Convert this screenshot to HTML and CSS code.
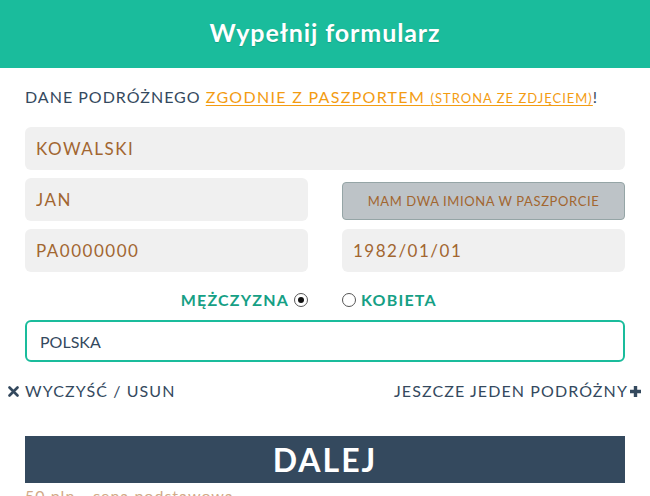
FILE: index.html
```html
<!DOCTYPE html>
<html lang="pl">
<head>
  <meta charset="UTF-8">
  <title>Wypełnij formularz</title>
  <link rel="stylesheet" href="styles.css">
</head>
<body>

<div class="header">
  <h1>Wypełnij formularz</h1>
</div>

<div class="form-container">
  <p class="intro">
    DANE PODRÓŻNEGO <a href="#" class="passport">ZGODNIE Z PASZPORTEM <small>(STRONA ZE ZDJĘCIEM)</small></a>!
  </p>

  <!-- Passenger fields -->
  <div class="form-row">
    <input type="text" class="field" value="KOWALSKI">
  </div>
  <div class="form-row cols">
    <input type="text" class="field" value="JAN">
    <button class="second-name">MAM DWA IMIONA W PASZPORCIE</button>
  </div>
  <div class="form-row cols">
    <input type="text" class="field" value="PA0000000">
    <input type="text" class="field" value="1982/01/01">
  </div>

  <!-- Gender -->
  <div class="gender cols">
    <label class="gender-opt left">MĘŻCZYZNA <span class="radio checked"></span></label>
    <label class="gender-opt"><span class="radio"></span> KOBIETA</label>
  </div>

  <div class="form-row">
    <input type="text" class="field country" value="POLSKA">
  </div>

  <div class="actions">
    <a href="#" class="action">
      <svg width="11" height="11" viewBox="0 0 11 11"><path d="M1.5 1.5l8 8M9.5 1.5l-8 8" stroke="#34495e" stroke-width="2.6" stroke-linecap="round"/></svg>
      WYCZYŚĆ / USUN
    </a>
    <a href="#" class="action">
      JESZCZE JEDEN PODRÓŻNY
      <svg width="13" height="13" viewBox="0 0 13 13"><path d="M6.5 1v11M1 6.5h11" stroke="#34495e" stroke-width="3.4"/></svg>
    </a>
  </div>

  <button class="next">DALEJ</button>
  <p class="price">50 pln - cena podstawowa</p>
</div>

</body>
</html>
```

FILE: styles.css
```css
body {
  margin: 0;
  font-family: Lato, 'Open Sans', sans-serif;
  background: #fff;
  color: #34495e;
}

.header {
  background-color: #1abc9c;
  height: 68px;
  display: flex;
  align-items: center;
  justify-content: center;
}

.header h1 {
  margin: 0 0 5px;
  color: #fff;
  font-size: 25px;
  font-weight: bold;
  letter-spacing: 0.9px;
  text-shadow: 0 1px 1px rgba(0, 0, 0, 0.15);
}

.form-container {
  padding: 20px 25px 0;
}

.intro {
  margin: 0 0 20px;
  font-size: 16px;
  line-height: 18px;
  letter-spacing: 1px;
}

.passport {
  color: #f39c12;
  letter-spacing: 1.3px;
  text-decoration: underline;
  text-underline-offset: 2px;
}

.passport small {
  font-size: 13px;
  letter-spacing: 1px;
}

.form-row {
  margin-bottom: 8px;
}

.cols {
  display: grid;
  grid-template-columns: 1fr 1fr;
  column-gap: 34px;
}

.field {
  box-sizing: border-box;
  width: 100%;
  height: 43px;
  padding: 0 11px;
  border: none;
  border-radius: 6px;
  background: #f0f0f0;
  color: #a26630;
  font-family: inherit;
  font-size: 17px;
  letter-spacing: 1.5px;
  outline: none;
}

.second-name {
  box-sizing: border-box;
  height: 38px;
  margin-top: 4px;
  border: 1px solid #95a5a6;
  border-radius: 4px;
  background: #bdc3c7;
  color: #a26630;
  font-family: inherit;
  font-size: 13px;
  letter-spacing: 0.6px;
  cursor: pointer;
}

.gender {
  margin: 18px 0 10px;
  line-height: 20px;
}

.gender-opt {
  display: flex;
  align-items: center;
  gap: 5px;
  color: #16a085;
  font-size: 16px;
  font-weight: bold;
  letter-spacing: 1.2px;
}

.gender-opt.left {
  justify-content: flex-end;
}

.radio {
  box-sizing: border-box;
  width: 14px;
  height: 14px;
  border: 1px solid #555;
  border-radius: 50%;
  background: #fff;
  display: flex;
  align-items: center;
  justify-content: center;
}

.radio.checked::after {
  content: "";
  width: 6px;
  height: 6px;
  border-radius: 50%;
  background: #111;
}

.country {
  height: 42px;
  padding: 0 13px;
  border: 2px solid #1abc9c;
  background: #fff;
  color: #34495e;
  font-size: 16px;
  letter-spacing: 0;
}

.actions {
  display: flex;
  justify-content: space-between;
  margin: 19px -17px 35px;
  line-height: 20px;
}

.action {
  display: flex;
  align-items: center;
  gap: 6px;
  color: #34495e;
  text-decoration: none;
  font-size: 16px;
  letter-spacing: 1.1px;
}

.action:last-child {
  gap: 1px;
}

.next {
  display: block;
  width: 100%;
  height: 47px;
  border: none;
  background-color: #34495e;
  color: #fff;
  font-family: inherit;
  font-size: 32px;
  font-weight: bold;
  letter-spacing: 2px;
  cursor: pointer;
}

.price {
  margin: 3px 0 0;
  color: #d2aa88;
  font-size: 16px;
  line-height: 20px;
  letter-spacing: 1px;
}
```
